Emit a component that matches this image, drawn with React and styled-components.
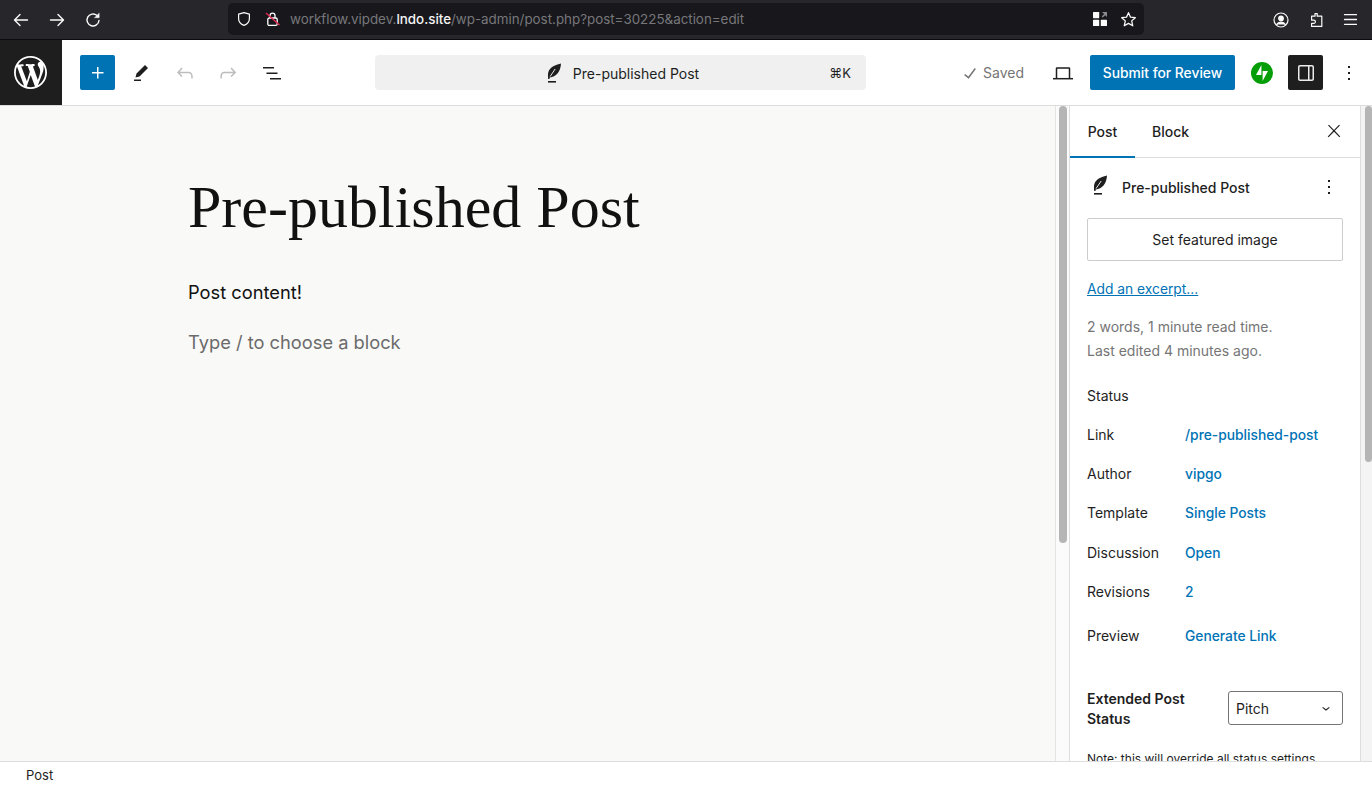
import React from "react";
import styled, { createGlobalStyle } from "styled-components";

const Global = createGlobalStyle`
  html, body { margin: 0; padding: 0; height: 100%; background: #fff; }
  body { font-family: Inter, "Liberation Sans", sans-serif; color: #1e1e1e; -webkit-font-smoothing: antialiased; }
  * { box-sizing: border-box; }
`;

const Page = styled.div`
  width: 1372px; height: 786px; overflow: hidden; display: flex; flex-direction: column;
`;

/* Browser chrome */
const BrowserBar = styled.div`
  height: 40px; flex: none; background: #26262b; border-bottom: 1px solid #0c0c0e;
  display: flex; align-items: flex-start; padding: 3px 14px 0 0;
`;
const NavGroup = styled.div`
  display: flex; width: 228px; height: 33px; align-items: center; padding-left: 12px; gap: 18px; flex: none;
`;
const UrlBox = styled.div`
  width: 916px; height: 32px; flex: none; background: #18181c; border-radius: 5px;
  display: flex; align-items: center; padding: 0 7px 0 8px; color: #fff;
`;
const UrlGap = styled.span`width: 13px; flex: none;`;
const UrlText = styled.div`
  margin-left: 9px; flex: 1; font-size: 13.37px; color: #77777b; white-space: nowrap;
  strong { color: #f4f4f4; font-weight: 500; }
`;
const ChromeRight = styled.div`
  margin-left: auto; display: flex; align-items: center; gap: 19px; height: 33px; padding-right: 0;
`;
const UrlIcons = styled.div`display: flex; gap: 12px; align-items: center;`;

/* Editor header */
const Header = styled.div`
  height: 66px; flex: none; display: flex; align-items: center; border-bottom: 1px solid #ddd; background: #fff;
`;
const LogoBox = styled.div`
  width: 62px; height: 65px; background: #1e1e1e; display: flex; align-items: center; justify-content: center; flex: none; padding-right: 2px;
`;
const Tools = styled.div`display: flex; align-items: center; margin-left: 18px; width: 295px; flex: none;`;
const IconSlot = styled.div`
  width: ${p => p.$w || 44}px; height: 35px; display: flex; align-items: center; justify-content: center; flex: none;
`;
const HeaderMore = styled(IconSlot)`margin-left: 3px;`;
const AddButton = styled.div`
  width: 35px; height: 35px; background: #0073b5; border-radius: 2px; display: flex; align-items: center; justify-content: center; flex: none;
`;
const Command = styled.div`
  width: 491px; height: 35px; background: #f0f0f0; border-radius: 4px; flex: none;
  display: flex; align-items: center; justify-content: center; position: relative; font-size: 14px; gap: 8px; padding: 1px 4px 0 3px;
`;
const Shortcut = styled.span`
  position: absolute; right: 15px; top: 10px; font-size: 13px; color: #1e1e1e;
`;
const Actions = styled.div`display: flex; align-items: center; margin-left: 92px;`;
const Saved = styled.div`
  display: flex; align-items: center; gap: 1px; font-size: 14px; color: #757575; width: 78px; flex: none; white-space: nowrap;
`;
const SubmitButton = styled.div`
  width: 145px; height: 35px; background: #0073b5; border-radius: 2px; color: #fff; font-size: 13.8px; font-weight: 500;
  display: flex; align-items: center; justify-content: center; flex: none;
`;
const DrawerButton = styled.div`
  width: 35px; height: 35px; background: #1e1e1e; border-radius: 2px; display: flex; align-items: center; justify-content: center; flex: none;
`;

/* Main */
const Main = styled.div`flex: 1; display: flex; min-height: 0; background: #f9f9f7;`;
const Canvas = styled.div`
  width: 1055px; flex: none; padding: 58px 0 0 188px; overflow: hidden;
`;
const Title = styled.h1`
  margin: 0; font-family: "Liberation Serif", serif; font-weight: 400; font-size: 60px; line-height: 86px; color: #111; white-space: nowrap;
`;
const Para = styled.p`
  margin: ${p => p.$top}px 0 0; font-size: 18.3px; line-height: 28px; color: ${p => p.$muted ? "#6b6b6b" : "#111"};
`;
const Track = styled.div`
  flex: none; width: ${p => p.$w}px; padding: 0 ${p => p.$pr}px 0 ${p => p.$pl}px; background: ${p => p.$bg};
  border-left: 1px solid ${p => p.$line};
`;
const Thumb = styled.div`
  height: ${p => p.$h}px; width: 100%; background: #b5b5b5; border-radius: 5px;
`;
const Sidebar = styled.div`
  width: 292px; flex: none; background: #fff; border-left: 1px solid #ddd; border-right: 1px solid #ddd; overflow: hidden;
`;
const Tabs = styled.div`
  height: 52px; display: flex; border-bottom: 1px solid #ddd; align-items: stretch;
`;
const Tab = styled.div`
  width: ${p => p.$w}px; flex: none; display: flex; align-items: center; justify-content: center; font-size: 14px; font-weight: 500;
  padding-bottom: 2px;
  box-shadow: ${p => p.$active ? "inset 0 -2px 0 #0073b5" : "none"}; margin-bottom: -1px;
`;
const CloseSlot = styled.div`margin-left: auto; width: 53px; display: flex; align-items: center; justify-content: center; padding-bottom: 2px;`;
const Panel = styled.div`padding: 15px 17px 0 17px;`;
const PostRow = styled.div`display: flex; align-items: center; height: 28px; font-size: 14px; font-weight: 450; gap: 11px;`;
const FeatherWrap = styled.div`display: flex; margin-top: -4px;`;
const MoreSlot = styled.div`margin-left: auto; display: flex; margin-right: 2px;`;
const FeaturedButton = styled.div`
  margin-top: 17px; height: 43px; border: 1px solid #ccc; border-radius: 2px; display: flex; align-items: center; justify-content: center; font-size: 14px;
`;
const Excerpt = styled.a`
  display: block; margin-top: 18px; font-size: 13.8px; line-height: 20px; color: #0073b5; text-decoration: underline;
`;
const Meta = styled.div`margin-top: 16px; font-size: 14px; line-height: 24px; color: #757575;`;
const Row = styled.div`
  display: flex; align-items: center; height: 20px; margin-top: ${p => p.$top}px; font-size: 14px;
`;
const RowLabel = styled.div`width: 98px; flex: none;`;
const RowValue = styled.div`color: #0073b5; font-weight: 500; font-size: 13.8px; padding-top: 1px;`;
const StatusRow = styled.div`display: flex; justify-content: space-between; margin-top: 46px;`;
const StatusLabel = styled.div`font-size: 14px; font-weight: 600; line-height: 20px; width: 120px; margin-top: -2px;`;
const Select = styled.div`
  width: 115px; height: 34px; border: 1px solid #757575; border-radius: 3px; display: flex; align-items: center; justify-content: space-between;
  padding: 0 8px 0 7px; font-size: 14px;
`;
const Note = styled.div`margin-top: 21px; font-size: 12px; line-height: 18px; white-space: nowrap;`;

const Footer = styled.div`
  height: 25px; flex: none; background: #fff; border-top: 1px solid #ddd; font-size: 13px; display: flex; align-items: center; padding: 1px 0 0 26px;
`;

const Feather = () => (
  <svg width="24" height="24" viewBox="0 0 24 24" fill="#1e1e1e">
    <path d="M20 2.5C13 4 7.5 7 7 13c-.1 2 0 3.5.2 5h1.2l.4-1.5C15 16 19.5 11 20 2.5Z" />
    <path d="M9 15.6 14.2 8" stroke="#fff" strokeWidth=".9" fill="none" />
    <rect x="7" y="20" width="8" height="1.6" />
  </svg>
);

const G = ({ d, size = 24, fill = "#1e1e1e" }) => (
  <svg width={size} height={size} viewBox="0 0 24 24" fill={fill}><path d={d} /></svg>
);

const I = {
  plus: "M11 12.5V17.5H12.5V12.5H17.5V11H12.5V6H11V11H6V12.5H11Z",
  pencil: "m19 7-3-3-8.5 8.5-1 4 4-1L19 7Zm-7 11.5H5V20h7v-1.5Z",
  undo: "M18.3 11.7c-.6-.6-1.4-.9-2.3-.9H6.7l2.9-3.3-1.1-1-4.5 5L8.5 16l1-1-2.7-2.7H16c.5 0 .9.2 1.3.5 1 1 1 3.4 1 4.5v.3h1.5v-.2c0-1.5 0-4.3-1.5-5.7z",
  redo: "M15.6 6.5l-1.1 1 2.9 3.3H8c-.9 0-1.7.3-2.3.9-1.4 1.5-1.4 4.2-1.4 5.6v.2h1.5v-.3c0-1.1 0-3.5 1-4.5.3-.3.7-.5 1.3-.5h9.2L14.5 15l1.1 1.1 4.6-4.6-4.6-5z",
  list: "M3 6h11v1.5H3V6Zm3.5 5.5h11V13h-11v-1.5ZM21 17H10v1.5h11V17Z",
  more: "M13 19h-2v-2h2v2zm0-6h-2v-2h2v2zm0-6h-2V5h2v2z",
  close: "M13 11.8l6.1-6.3-1-1-6.1 6.2-6.1-6.2-1 1 6.1 6.3-6.5 6.7 1 1 6.5-6.6 6.5 6.6 1-1z",
  check: "M16.7 7.1l-6.3 8.5-3.3-2.5-.9 1.2 4.5 3.4L17.9 8z",
  chevron: "M17.5 11.6L12 16l-5.5-4.4.9-1.2L12 14l4.5-3.6 1 1.2z",
};

const WpLogo = () => (
  <svg width="33" height="33" viewBox="0 0 20 20" fill="#fff">
    <path d="M20 10c0-5.51-4.49-10-10-10C4.48 0 0 4.49 0 10c0 5.52 4.48 10 10 10 5.51 0 10-4.48 10-10zM7.78 15.37L4.37 6.22c.55-.02 1.17-.08 1.17-.08.5-.06.44-1.13-.06-1.11 0 0-1.45.11-2.37.11-.18 0-.37 0-.58-.01C4.12 2.69 6.87 1.11 10 1.11c2.33 0 4.45.87 6.05 2.34-.68-.11-1.65.39-1.65 1.58 0 .74.45 1.36.9 2.1.35.61.55 1.36.55 2.46 0 1.49-1.4 5-1.4 5l-3.03-8.37c.54-.02.82-.17.82-.17.5-.05.44-1.25-.06-1.22 0 0-1.44.12-2.38.12-.87 0-2.33-.12-2.33-.12-.5-.03-.56 1.2-.06 1.22l.92.08 1.26 3.41zM17.41 10c.24-.64.74-1.87.43-4.25.7 1.29 1.05 2.71 1.05 4.25 0 3.29-1.73 6.24-4.4 7.78.97-2.59 1.94-5.2 2.92-7.78zM6.1 18.09C3.12 16.65 1.11 13.53 1.11 10c0-1.3.23-2.48.72-3.59C3.25 10.3 4.67 14.2 6.1 18.09zm4.03-6.63l2.58 6.98c-.86.29-1.76.45-2.71.45-.79 0-1.57-.11-2.29-.33.81-2.38 1.62-4.74 2.42-7.1z" />
  </svg>
);

const Stroke = ({ children, w = 16, h = 16, vb = "0 0 16 16", sw = 1.3 }) => (
  <svg width={w} height={h} viewBox={vb} fill="none" stroke="#fbfbfb" strokeWidth={sw} strokeLinecap="round" strokeLinejoin="round">{children}</svg>
);

const Laptop = () => (
  <svg width="24" height="24" viewBox="0 0 24 24" fill="none" stroke="#1e1e1e" strokeWidth="1.5">
    <path d="M5.5 17.2V7.6c0-.3.2-.5.5-.5h12c.3 0 .5.2.5.5v9.6" />
    <path d="M2 17.7h20" />
  </svg>
);

const DrawerRight = () => (
  <svg width="24" height="24" viewBox="0 0 24 24" fill="#ececec">
    <path fillRule="evenodd" d="M18 4H6c-1.1 0-2 .9-2 2v12c0 1.1.9 2 2 2h12c1.1 0 2-.9 2-2V6c0-1.1-.9-2-2-2zm-4 14.5H6c-.3 0-.5-.2-.5-.5V6c0-.3.2-.5.5-.5h8v13zm4.5-.5c0 .3-.2.5-.5.5h-2.5v-13H18c.3 0 .5.2.5.5v12z" />
  </svg>
);

const Jetpack = () => (
  <svg width="22" height="22" viewBox="0 0 22 22">
    <circle cx="11" cy="11" r="11" fill="#069e08" />
    <path d="M10.4 3v10H5zM11.6 19V9H17z" fill="#fff" />
  </svg>
);

const rows = [
  ["Status", null, 22],
  ["Link", "/pre-published-post", 19],
  ["Author", "vipgo", 19],
  ["Template", "Single Posts", 19],
  ["Discussion", "Open", 20],
  ["Revisions", "2", 19],
  ["Preview", "Generate Link", 24],
];

export default function App() {
  return (
    <Page>
      <Global />
      <BrowserBar>
        <NavGroup>
          <Stroke w={18} h={18} vb="0 0 18 18" sw={1.4}><path d="M15.5 9H2.5M8 3.5 2.5 9 8 14.5" /></Stroke>
          <Stroke w={18} h={18} vb="0 0 18 18" sw={1.4}><path d="M2.5 9h13M10 3.5 15.5 9 10 14.5" /></Stroke>
          <Stroke w={18} h={18} vb="0 0 18 18" sw={1.4}>
            <path d="M15 9.5a6 6 0 1 1-2.2-5.2" />
            <path d="M15.2 2.2v4.6h-4.6z" fill="#fbfbfb" strokeWidth=".4" />
          </Stroke>
        </NavGroup>
        <UrlBox>
          <Stroke w={16} h={16} sw={1.2}><path d="M8 1.6 2.6 3.2v4.2c0 3.4 2.4 5.8 5.4 7 3-1.2 5.4-3.6 5.4-7V3.2z" /></Stroke>
          <UrlGap />
          <svg width="16" height="16" viewBox="0 0 16 16" fill="none">
            <rect x="2.8" y="7" width="9.4" height="7.4" rx="1.5" stroke="#fff" strokeWidth="1.3" />
            <path d="M5 7V4.6a2.5 2.5 0 0 1 5 0V7" stroke="#fff" strokeWidth="1.3" />
            <path d="M1 2l13.5 12" stroke="#e22850" strokeWidth="1.4" />
          </svg>
          <UrlText>workflow.vipdev.<strong>lndo.site</strong>/wp-admin/post.php?post=30225&amp;action=edit</UrlText>
          <UrlIcons>
            <svg width="16" height="16" viewBox="0 0 16 16" fill="#fbfbfb">
              <rect x="1" y="1" width="6.2" height="6.2" rx=".6" />
              <rect x="1" y="8.8" width="6.2" height="6.2" rx=".6" />
              <rect x="8.8" y="8.8" width="6.2" height="6.2" rx=".6" />
              <path d="M10 1h5v5l-1.8-1.8-2.5 2.3-1-1 2.4-2.5z" fill="#8a8a8e" />
            </svg>
            <Stroke w={17} h={17} sw={1.2}><path d="M8 1.6l1.9 4.2 4.5.5-3.4 3 1 4.6L8 11.6l-4 2.3 1-4.6-3.4-3 4.5-.5z" /></Stroke>
          </UrlIcons>
        </UrlBox>
        <ChromeRight>
          <Stroke w={16} h={16} sw={1.2}>
            <circle cx="8" cy="8" r="7" /><circle cx="8" cy="6.4" r="2.3" fill="#fbfbfb" /><path d="M3.6 12.6c1-1.8 2.6-2.4 4.4-2.4s3.4.6 4.4 2.4" fill="#fbfbfb" />
          </Stroke>
          <Stroke w={16} h={16} sw={1.2}>
            <path d="M7 1.6h2.2v2.6h4.6v10.2H3.6v-3h2.2a1.6 1.6 0 0 0 0-3.2H3.6V4.2H7z" />
          </Stroke>
          <Stroke w={15} h={15} vb="0 0 15 15" sw={1.3}><path d="M1.5 2.7h12M1.5 7.5h12M1.5 12.3h12" /></Stroke>
        </ChromeRight>
      </BrowserBar>

      <Header>
        <LogoBox><WpLogo /></LogoBox>
        <Tools>
          <AddButton><G d={I.plus} fill="#fff" /></AddButton>
          <IconSlot $w={52}><G d={I.pencil} /></IconSlot>
          <IconSlot $w={36}><G d={I.undo} fill="#bdbdbd" /></IconSlot>
          <IconSlot $w={50}><G d={I.redo} fill="#bdbdbd" /></IconSlot>
          <IconSlot $w={38}><G d={I.list} /></IconSlot>
        </Tools>
        <Command>
          <Feather />
          <span>Pre-published Post</span>
          <Shortcut>⌘K</Shortcut>
        </Command>
        <Actions>
          <Saved><G d={I.check} fill="#757575" />Saved</Saved>
          <IconSlot $w={54}><Laptop /></IconSlot>
          <SubmitButton>Submit for Review</SubmitButton>
          <IconSlot $w={53}><Jetpack /></IconSlot>
          <DrawerButton><DrawerRight /></DrawerButton>
          <HeaderMore $w={46}><G d={I.more} /></HeaderMore>
        </Actions>
      </Header>

      <Main>
        <Canvas>
          <Title>Pre-published Post</Title>
          <Para $top={28}>Post content!</Para>
          <Para $top={22} $muted>Type / to choose a block</Para>
        </Canvas>
        <Track $w={14} $pl={3} $pr={2} $bg="#fbfbfb" $line="#e4e4e4"><Thumb $h={437} /></Track>
        <Sidebar>
          <Tabs>
            <Tab $w={65} $active>Post</Tab>
            <Tab $w={71}>Block</Tab>
            <CloseSlot><G d={I.close} size={20} /></CloseSlot>
          </Tabs>
          <Panel>
            <PostRow>
              <FeatherWrap><Feather /></FeatherWrap>
              <span>Pre-published Post</span>
              <MoreSlot><G d={I.more} /></MoreSlot>
            </PostRow>
            <FeaturedButton>Set featured image</FeaturedButton>
            <Excerpt>Add an excerpt...</Excerpt>
            <Meta>2 words, 1 minute read time.<br />Last edited 4 minutes ago.</Meta>
            {rows.map(([label, value, top]) => (
              <Row key={label} $top={top}>
                <RowLabel>{label}</RowLabel>
                {value && <RowValue>{value}</RowValue>}
              </Row>
            ))}
            <StatusRow>
              <StatusLabel>Extended Post Status</StatusLabel>
              <Select>Pitch<G d={I.chevron} size={16} /></Select>
            </StatusRow>
            <Note>Note: this will override all status settings</Note>
          </Panel>
        </Sidebar>
        <Track $w={11} $pl={3} $pr={0} $bg="#f4f4f4" $line="transparent"><Thumb $h={356} /></Track>
      </Main>

      <Footer>Post</Footer>
    </Page>
  );
}
